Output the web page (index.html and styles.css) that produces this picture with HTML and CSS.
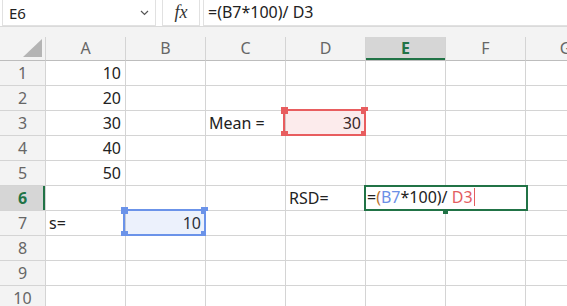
FILE: index.html
```html
<!DOCTYPE html>
<html>
<head>
  <meta charset="UTF-8">
  <title>Sheet</title>
  <link rel="stylesheet" href="styles.css">
</head>
<body>

<div class="fbar">
  <div class="namebox">
    <span>E6</span>
    <svg class="chev" width="9" height="6" viewBox="0 0 9 6"><polyline points="1,1 4.5,4.5 8,1" fill="none" stroke="#555" stroke-width="1.2"/></svg>
  </div>
  <div class="fxbox">fx</div>
  <div class="formula">=(B7*100)/ D3</div>
</div>

<div class="sheet">
  <div class="grid">
    <div class="corner"><span class="tri"></span></div>
    <div class="colhead">A</div>
    <div class="colhead">B</div>
    <div class="colhead">C</div>
    <div class="colhead">D</div>
    <div class="colhead sel">E</div>
    <div class="colhead">F</div>
    <div class="colhead">G</div>

    <div class="rowhead">1</div>
    <div class="cell num">10</div><div class="cell"></div><div class="cell"></div><div class="cell"></div><div class="cell"></div><div class="cell"></div><div class="cell"></div>

    <div class="rowhead">2</div>
    <div class="cell num">20</div><div class="cell"></div><div class="cell"></div><div class="cell"></div><div class="cell"></div><div class="cell"></div><div class="cell"></div>

    <div class="rowhead">3</div>
    <div class="cell num">30</div><div class="cell"></div><div class="cell">Mean =</div>
    <div class="cell num">30<span class="ref red"><i class="h tl"></i><i class="h tr"></i><i class="h bl"></i><i class="h br"></i></span></div>
    <div class="cell"></div><div class="cell"></div><div class="cell"></div>

    <div class="rowhead">4</div>
    <div class="cell num">40</div><div class="cell"></div><div class="cell"></div><div class="cell"></div><div class="cell"></div><div class="cell"></div><div class="cell"></div>

    <div class="rowhead">5</div>
    <div class="cell num">50</div><div class="cell"></div><div class="cell"></div><div class="cell"></div><div class="cell"></div><div class="cell"></div><div class="cell"></div>

    <div class="rowhead sel">6</div>
    <div class="cell"></div><div class="cell"></div><div class="cell"></div><div class="cell">RSD=</div>
    <div class="cell">
      <div class="editor">=<span class="paren">(</span><span class="blue">B7</span>*100)/ <span class="red-t">D3</span><span class="caret"></span></div>
      <span class="handle"></span>
    </div>
    <div class="cell"></div><div class="cell"></div>

    <div class="rowhead">7</div>
    <div class="cell">s=</div>
    <div class="cell num">10<span class="ref blue-b"><i class="h tl"></i><i class="h tr"></i><i class="h bl"></i><i class="h br"></i></span></div>
    <div class="cell"></div><div class="cell"></div><div class="cell"></div><div class="cell"></div><div class="cell"></div>

    <div class="rowhead">8</div>
    <div class="cell"></div><div class="cell"></div><div class="cell"></div><div class="cell"></div><div class="cell"></div><div class="cell"></div><div class="cell"></div>

    <div class="rowhead">9</div>
    <div class="cell"></div><div class="cell"></div><div class="cell"></div><div class="cell"></div><div class="cell"></div><div class="cell"></div><div class="cell"></div>

    <div class="rowhead">10</div>
    <div class="cell"></div><div class="cell"></div><div class="cell"></div><div class="cell"></div><div class="cell"></div><div class="cell"></div><div class="cell"></div>
  </div>
</div>

</body>
</html>
```

FILE: styles.css
```css
body {
  margin: 0;
  background: #fff;
  font-family: "Noto Sans", "Open Sans", sans-serif;
  font-size: 16px;
  color: #222;
  overflow: hidden;
}
.fbar {
  display: flex;
  height: 27px;
  background: #fff;
  border-bottom: 1px solid #dadada;
  box-sizing: border-box;
}
.namebox, .fxbox, .formula {
  height: 26px;
  border: 1px solid #e1e1e1;
  border-top: none;
  box-sizing: border-box;
  background: #fff;
}
.namebox {
  width: 154px;
  margin-left: 2px;
  display: flex;
  align-items: center;
  justify-content: space-between;
  padding: 0 6px 0 6px;
  font-size: 15px;
}
.fxbox {
  width: 38px;
  margin-left: 6px;
  font-family: "Liberation Serif", serif;
  font-style: italic;
  font-size: 18px;
  color: #333;
  text-align: center;
  line-height: 24px;
}
.formula {
  flex: 1;
  margin-left: 3px;
  border-right: none;
  padding-left: 4px;
  line-height: 25px;
}
.sheet {
  background: #f3f3f3;
  padding-top: 10px;
  height: 279px;
  overflow: hidden;
}
.grid {
  display: grid;
  grid-template-columns: 46px repeat(7, 80px);
  grid-template-rows: 24px repeat(10, 25px);
}
.corner {
  position: relative;
  border-right: 1px solid #d4d4d4;
  border-bottom: 1px solid #bdbdbd;
}
.tri {
  position: absolute;
  right: 3px;
  bottom: 3px;
  width: 0;
  height: 0;
  border-left: 19px solid transparent;
  border-bottom: 18px solid #b4b4b4;
}
.colhead {
  border-right: 1px solid #d4d4d4;
  border-bottom: 1px solid #bdbdbd;
  text-align: center;
  line-height: 23px;
  color: #666;
}
.colhead.sel {
  background: #d6d6d6;
  color: #217346;
  font-weight: bold;
  box-shadow: inset 0 -2px 0 #217346;
}
.rowhead {
  background: #f3f3f3;
  border-right: 1px solid #d4d4d4;
  border-bottom: 1px solid #d4d4d4;
  text-align: center;
  line-height: 24px;
  color: #666;
}
.rowhead.sel {
  background: #d6d6d6;
  color: #217346;
  font-weight: bold;
  box-shadow: inset -2px 0 0 #217346;
}
.cell {
  position: relative;
  background: #fff;
  border-right: 1px solid #d4d4d4;
  border-bottom: 1px solid #d4d4d4;
  line-height: 24px;
  padding: 0 3px;
  white-space: nowrap;
}
.cell.num {
  text-align: right;
  padding-right: 4px;
}
.ref {
  position: absolute;
  left: -3px;
  top: -2px;
  width: 83px;
  height: 27px;
  border: 2px solid;
  box-sizing: border-box;
}
.ref.red {
  border-color: #e85d5f;
  background: rgba(232, 93, 95, 0.12);
}
.ref.blue-b {
  border-color: #6b93e9;
  background: rgba(107, 147, 233, 0.13);
}
.h {
  position: absolute;
  width: 7px;
  height: 7px;
}
.red .h { background: #e85d5f; }
.blue-b .h { background: #6b93e9; }
.h.tl { left: -4px; top: -4px; }
.h.tr { right: -4px; top: -4px; }
.h.bl { left: -4px; bottom: -4px; }
.h.br { right: -4px; bottom: -4px; }
.editor {
  position: absolute;
  left: -2px;
  top: -1px;
  width: 164px;
  height: 26px;
  box-sizing: border-box;
  border: 2px solid #217346;
  background: #fff;
  padding-left: 1px;
  line-height: 21px;
  z-index: 2;
}
.paren { color: #b8722c; }
.blue { color: #6b8fe6; }
.red-t { color: #e35d5f; }
.caret {
  display: inline-block;
  width: 1px;
  height: 18px;
  background: #e35d5f;
  vertical-align: -3px;
  margin-left: 1px;
}
.handle {
  position: absolute;
  right: -3px;
  bottom: -4px;
  width: 5px;
  height: 4px;
  background: #217346;
  z-index: 3;
}
```
